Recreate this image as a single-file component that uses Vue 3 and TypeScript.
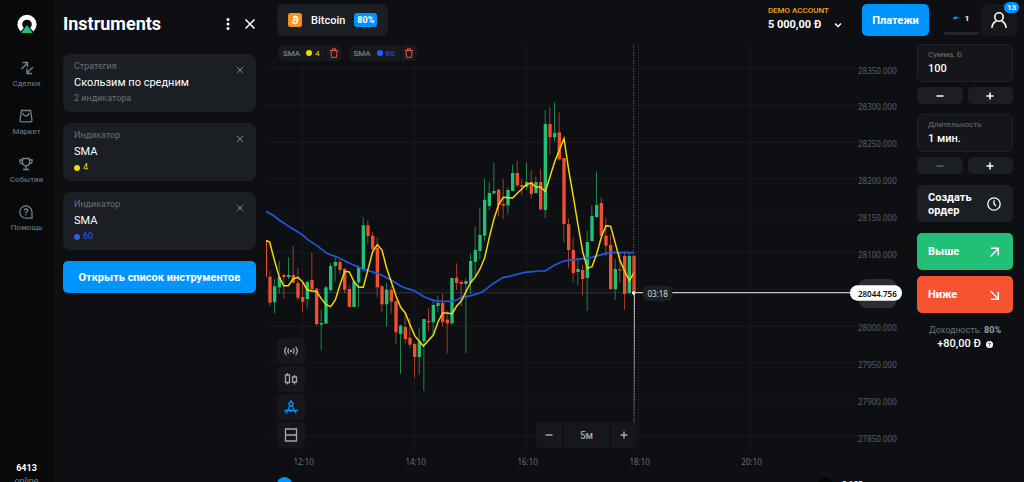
<script setup lang="ts">
import { ref } from 'vue'

type Candle = [high: number, top: number, bottom: number, low: number, up: 0 | 1]

const amount = ref('100')
const duration = ref('1 мин.')

const nav = [
  { id: 'deals', label: 'Сделки' },
  { id: 'market', label: 'Маркет' },
  { id: 'events', label: 'События' },
  { id: 'help', label: 'Помощь' },
]

const cards = [
  { kind: 'Стратегия', title: 'Скользим по средним', sub: '2 индикатора', tone: '' },
  { kind: 'Индикатор', title: 'SMA', sub: '4', tone: 'yellow' },
  { kind: 'Индикатор', title: 'SMA', sub: '60', tone: 'blue' },
]

const chips = [
  { name: 'SMA', period: '4', tone: 'yellow' },
  { name: 'SMA', period: '60', tone: 'blue' },
]

const tools = [
  { id: 'signals', label: 'Сигналы' },
  { id: 'candles', label: 'Тип графика' },
  { id: 'draw', label: 'Инструменты' },
  { id: 'layout', label: 'Раскладка' },
]

// The plot uses three units per pixel; one candle takes 14 units.
const STEP = 14
const candles: Candle[] = [
  [720, 722, 830, 832, 0],
  [813, 830, 908, 918, 0], [837, 859, 907, 939, 1], [783, 831, 862, 881, 1], [820, 825, 831, 895, 0],
  [772, 825, 831, 837, 1], [738, 825, 848, 849, 0], [804, 849, 893, 900, 0], [850, 891, 905, 938, 0],
  [842, 846, 897, 926, 1], [758, 840, 867, 877, 0], [864, 866, 972, 979, 0], [928, 969, 974, 1052, 1],
  [858, 862, 971, 972, 1], [789, 798, 870, 876, 1], [772, 786, 798, 845, 1], [780, 786, 810, 822, 0],
  [804, 807, 869, 879, 0], [857, 867, 921, 921, 0], [840, 845, 921, 921, 1], [797, 802, 847, 921, 1],
  [652, 676, 810, 816, 1], [659, 676, 708, 731, 0], [697, 707, 747, 756, 0], [713, 743, 862, 892, 0],
  [855, 859, 913, 935, 0], [848, 869, 913, 980, 1], [858, 870, 905, 941, 0], [900, 904, 997, 1032, 0],
  [974, 977, 1002, 1122, 1], [940, 981, 1017, 1031, 0], [955, 1013, 1034, 1043, 0], [1028, 1032, 1071, 1133, 0],
  [983, 1024, 1071, 1124, 1], [957, 957, 1024, 1172, 1], [924, 963, 967, 993, 0], [898, 915, 967, 1006, 1],
  [886, 909, 918, 937, 1], [881, 909, 966, 980, 0], [933, 959, 970, 1061, 0], [833, 834, 970, 974, 1],
  [790, 833, 849, 870, 0], [840, 846, 852, 920, 0], [835, 843, 852, 1059, 1], [761, 783, 849, 882, 1],
  [681, 750, 785, 828, 1], [622, 705, 753, 778, 1], [537, 600, 707, 723, 1], [546, 579, 618, 632, 1],
  [489, 573, 580, 583, 1], [567, 569, 615, 648, 0], [537, 612, 617, 657, 0], [562, 570, 616, 643, 1],
  [494, 519, 573, 574, 1], [482, 519, 556, 562, 0], [538, 555, 561, 586, 0], [489, 546, 561, 570, 1],
  [510, 546, 582, 597, 0], [530, 546, 579, 580, 1], [507, 546, 628, 632, 0], [330, 372, 630, 654, 1],
  [321, 372, 412, 465, 0], [307, 399, 412, 424, 1], [337, 397, 478, 482, 0], [474, 474, 672, 726, 0],
  [655, 673, 750, 805, 0], [713, 750, 819, 847, 0], [774, 807, 816, 857, 1], [795, 810, 837, 887, 0],
  [692, 726, 834, 933, 1], [616, 648, 723, 723, 1], [515, 615, 651, 654, 1], [592, 609, 707, 710, 0],
  [653, 707, 737, 770, 0], [705, 735, 867, 870, 0], [777, 807, 867, 900, 1], [755, 808, 812, 847, 0],
  [754, 768, 882, 930, 0], [760, 768, 879, 883, 1], [766, 768, 879, 879, 0],
]
const candleX = (i: number) => Math.round(-2 + STEP * i)

const fastSma =
  '0,721 11,726 25,780 40,832 53,857 67,857 82,836 96,832 110,846 124,870 152,875 166,896 180,914 194,920 208,900 222,854 236,814 250,816 264,845 278,862 292,862 306,808 320,755 334,734 348,750 362,805 376,846 390,888 404,922 418,939 432,974 446,1007 460,1024 472,1038 502,1005 516,966 530,939 544,939 558,942 572,918 586,903 600,875 614,847 628,831 642,807 656,773 670,712 684,656 698,614 712,592 740,594 754,580 768,566 782,553 796,549 810,561 824,561 838,575 866,485 894,416 908,510 922,590 936,675 950,755 964,805 978,800 992,762 1006,712 1020,677 1034,679 1048,730 1062,782 1076,813 1090,842 1104,818'
const slowSma =
  '0,634 20,645 40,660 68,679 110,705 124,718 152,736 180,758 194,765 208,769 236,782 264,796 292,808 334,820 348,826 376,841 404,858 418,864 432,868 446,873 474,890 502,901 516,904 558,904 572,900 586,893 614,887 642,879 656,871 670,859 684,849 698,841 712,832 726,830 750,824 777,817 820,813 838,813 866,795 894,783 922,779 950,776 978,772 1006,764 1034,757 1104,758'

const prices = [28350, 28300, 28250, 28200, 28150, 28100, 28050, 28000, 27950, 27900, 27850]
const priceY = (i: number) => Math.round(206 + 110.4 * i)
const times = ['12:10', '14:10', '16:10', '18:10', '20:10']
const timeX = (i: number) => 110 + 336 * i
</script>

<template>
  <div class="app">
    <nav class="rail">
      <a class="logo" href="#" aria-label="Olymp">
        <svg width="20" height="20" viewBox="0 0 20 20">
          <path d="M5.2 16.8A7.2 7.2 0 1 1 14.8 16.8" fill="none" stroke="#fff" stroke-width="4.8" />
          <path d="M10 12 15.8 20H4.2Z" fill="#22c076" stroke="#07090a" stroke-width="1" paint-order="stroke" />
        </svg>
      </a>
      <a v-for="item in nav" :key="item.id" class="rail-item" href="#">
        <svg width="16" height="16" viewBox="0 0 16 16" class="line">
          <template v-if="item.id === 'deals'">
            <path d="M2.500 9 8 3.500M3.500 2.500H8.500V7" />
            <path d="M14 7 8.500 12.500M8 8.500V13.500H13" />
          </template>
          <template v-else-if="item.id === 'market'">
            <path d="M3.500 2.500H12.500L14 12.200Q14 13.800 12.500 13.800H3.500Q2 13.800 2 12.200Z" />
            <path d="M5 5Q5.500 8 8 8T11 5" />
          </template>
          <template v-else-if="item.id === 'events'">
            <path d="M4.500 2.500H11.500V6Q11.500 9.800 8 9.800T4.500 6ZM8 10V13M5 13.500H11M4.500 4H1.800Q1.800 8 5 8M11.500 4H14.200Q14.200 8 11 8" />
          </template>
          <template v-else>
            <path d="M8 1.800A6.200 6.200 0 1 0 8 14.200H14V8A6.200 6.200 0 0 0 8 1.800Z" />
            <path d="M6.200 6.600Q6.300 5 8 5T9.800 6.500Q9.800 7.500 8 8.300V9.200M8 10.300V11.500" />
          </template>
        </svg>
        <span>{{ item.label }}</span>
      </a>
      <div class="online"><b>6413</b><span>online</span></div>
    </nav>

    <aside class="panel">
      <header class="panel-head">
        <h1>Instruments</h1>
        <button class="plain" aria-label="Меню">
          <svg width="12" height="14" viewBox="0 0 12 14" fill="#fff">
            <circle cx="6" cy="2.500" r="1.500" /><circle cx="6" cy="7" r="1.500" /><circle cx="6" cy="11.500" r="1.500" />
          </svg>
        </button>
        <button class="plain" aria-label="Закрыть">
          <svg width="12" height="12" viewBox="0 0 12 12" class="cross"><path d="M1.500 1.500 10.500 10.500M10.500 1.500 1.500 10.500" /></svg>
        </button>
      </header>
      <article v-for="(card, i) in cards" :key="i" class="card">
        <div class="card-text">
          <span class="kind">{{ card.kind }}</span>
          <h2>{{ card.title }}</h2>
          <span class="sub" :class="card.tone"><i v-if="card.tone" class="dot"></i>{{ card.sub }}</span>
        </div>
        <button class="plain card-close" aria-label="Удалить">
          <svg width="8" height="8" viewBox="0 0 8 8"><path d="M1 1 7 7M7 1 1 7" /></svg>
        </button>
      </article>
      <button class="open-list">Открыть список инструментов</button>
    </aside>

    <main class="workspace">
      <header class="topbar">
        <button class="asset">
          <svg width="14" height="14" viewBox="0 0 14 14">
            <rect width="14" height="14" rx="2.500" fill="#f7931a" />
            <g transform="rotate(12 7 7)" fill="none" stroke="#fff" stroke-width="1.300">
              <path d="M4.300 4H8Q9.500 4 9.500 5.400T8 6.900H5.500M8 6.900Q9.900 6.900 9.900 8.400T8 10H4.300M5.600 4V10M6.200 2.700V4M8 2.700V4M6.200 10V11.300M8 10V11.300" />
            </g>
          </svg>
          <span>Bitcoin</span>
          <b>80%</b>
        </button>
        <button class="account">
          <span class="account-text">
            <span class="account-kind">DEMO ACCOUNT</span>
            <span class="balance">5 000,00 Đ</span>
          </span>
          <svg width="8" height="8" viewBox="0 0 8 8"><path d="M1 2.500 4 5.500 7 2.500" fill="none" stroke="#fff" stroke-width="1.500" /></svg>
        </button>
        <button class="pay">Платежи</button>
        <button class="counter">
          <svg width="8" height="4" viewBox="0 0 8 4"><path d="M0 3.500Q0 0 3.500 0.500L7.500 2.500Q4 2 3 3Z" fill="#0094ff" /></svg>
          <span>1</span>
        </button>
        <button class="profile" aria-label="Профиль">
          <svg width="18" height="18" viewBox="0 0 18 18" fill="none" stroke="#fff" stroke-width="1.600">
            <circle cx="9" cy="6" r="4.200" /><path d="M1.800 16.800Q2.300 12 6.400 10M16.200 16.800Q15.700 12 11.600 10" />
          </svg>
          <span class="badge">13</span>
        </button>
      </header>

      <div class="trade">
        <section class="chart">
          <svg class="plot" viewBox="0 132 1926 1314" preserveAspectRatio="xMinYMin slice">
            <defs>
              <linearGradient id="fade" x1="0" y1="0" x2="0" y2="1">
                <stop offset="0" stop-color="#bfc2c6" /><stop offset="1" stop-color="#bfc2c6" stop-opacity="0.100" />
              </linearGradient>
            </defs>
            <g class="grid">
              <line v-for="(p, i) in prices" :key="p" x1="0" x2="1790" :y1="priceY(i)" :y2="priceY(i)" />
              <line v-for="(t, i) in times" :key="t" :x1="timeX(i)" :x2="timeX(i)" y1="132" y2="1355" />
            </g>
            <g class="axis">
              <template v-for="(p, i) in prices" :key="p">
                <text v-if="p !== 28050" x="1776" :y="priceY(i) + 15">{{ p }}.000</text>
              </template>
              <text v-for="(t, i) in times" :key="t" class="time" :x="timeX(i) + 3" y="1395">{{ t }}</text>
            </g>
            <line x1="0" x2="1104" y1="878" y2="878" stroke="#24272a" stroke-width="5" />
            <g v-for="(c, i) in candles" :key="i" :fill="c[4] ? '#22c076' : '#f24f30'">
              <rect :x="candleX(i) - 2" :y="c[0]" width="3" :height="c[3] - c[0]" opacity="0.650" />
              <rect :x="candleX(i) - 5" :y="c[1]" width="10" :height="c[2] - c[1]" />
            </g>
            <polyline :points="slowSma" fill="none" stroke="#1f58e3" stroke-width="5" />
            <polyline :points="fastSma" fill="none" stroke="#f0d80a" stroke-width="4.500" />
            <line x1="1103" x2="1103" y1="132" y2="1296" stroke="#55585c" stroke-width="3" stroke-dasharray="4 4" />
            <rect x="1104" y="879" width="3" height="410" fill="url(#fade)" />
            <line x1="1104" x2="1760" y1="878" y2="878" stroke="#c5c7c9" stroke-width="4" />
            <circle cx="1103" cy="879" r="5" fill="#fff" />
            <rect x="1131" y="857" width="88" height="46" rx="14" fill="#1c2023" />
            <text x="1175" y="890" class="timer">03:18</text>
            <rect x="1778" y="837" width="114" height="87" rx="24" fill="#2a2e33" />
            <rect x="1752" y="856" width="156" height="46" rx="22" fill="#fff" />
            <text x="1834" y="890" class="current">28044.756</text>
          </svg>

          <div class="chips">
            <div v-for="chip in chips" :key="chip.period" class="chip">
              <button class="chip-main">{{ chip.name }}<span :class="chip.tone"><i class="dot"></i>{{ chip.period }}</span></button>
              <button class="chip-del" aria-label="Удалить">
                <svg width="10" height="10" viewBox="0 0 10 10" fill="none" stroke="#e8553f" stroke-width="1"><path d="M1 2.500H9M3.500 2.500V.8H6.500V2.500M2 2.500 2.400 9.300H7.600L8 2.500" /></svg>
              </button>
            </div>
          </div>

          <div class="tools">
            <button v-for="tool in tools" :key="tool.id" :aria-label="tool.label" :class="{ active: tool.id === 'draw' }">
              <svg width="14" height="14" viewBox="0 0 14 14" class="line">
                <template v-if="tool.id === 'signals'">
                  <circle cx="7" cy="7" r="1.200" class="solid" />
                  <path d="M4.800 4.500Q3 7 4.800 9.500M9.200 4.500Q11 7 9.200 9.500M2.400 2.800Q-1 7 2.400 11.200M11.600 2.800Q15 7 11.600 11.200" />
                </template>
                <path v-else-if="tool.id === 'candles'" d="M1.500 3H5.500V10.500H1.500ZM3.500 1V3M3.500 10.500V12.500M8.500 5H12.500V10H8.500ZM10.500 3V5M10.500 10V12.500" />
                <path v-else-if="tool.id === 'draw'" d="M7 0V2M6 5.500 2 13.500M8 5.500 12 13.500M7 2A2 2 0 1 0 7 6A2 2 0 1 0 7 2M0 10.500H14M7 9V12" />
                <path v-else d="M1.500 1H12.500V13H1.500ZM1.500 7H12.500" />
              </svg>
            </button>
          </div>

          <div class="frame">
            <button aria-label="Меньше"><svg width="8" height="8" viewBox="0 0 8 8"><path d="M0.500 4H7.500" /></svg></button>
            <button class="frame-value">5м</button>
            <button aria-label="Больше"><svg width="8" height="8" viewBox="0 0 8 8"><path d="M0.500 4H7.500M4 .5V7.500" /></svg></button>
          </div>

          <div class="knob"></div>
          <div class="readout"><i></i><span>0:105</span></div>
        </section>

        <form class="order" @submit.prevent>
          <label class="field"><span>Сумма, Đ</span><input v-model="amount" /></label>
          <div class="stepper">
            <button type="button" aria-label="Уменьшить сумму"><svg width="8" height="8" viewBox="0 0 8 8"><path d="M0.500 4H7.500" /></svg></button>
            <button type="button" aria-label="Увеличить сумму"><svg width="8" height="8" viewBox="0 0 8 8"><path d="M0.500 4H7.500M4 .5V7.500" /></svg></button>
          </div>
          <label class="field"><span>Длительность</span><input v-model="duration" /></label>
          <div class="stepper">
            <button type="button" class="dim" aria-label="Уменьшить длительность"><svg width="8" height="8" viewBox="0 0 8 8"><path d="M0.500 4H7.500" /></svg></button>
            <button type="button" aria-label="Увеличить длительность"><svg width="8" height="8" viewBox="0 0 8 8"><path d="M0.500 4H7.500M4 .5V7.500" /></svg></button>
          </div>
          <button type="button" class="action create">
            <span>Создать ордер</span>
            <svg width="14" height="14" viewBox="0 0 14 14" fill="none" stroke="#fff" stroke-width="1.300"><circle cx="7" cy="7" r="6.200" /><path d="M7 3.300V7L9 9" /></svg>
          </button>
          <button type="button" class="action up">
            <span>Выше</span>
            <svg width="14" height="14" viewBox="0 0 14 14" fill="none" stroke="#fff" stroke-width="1.400"><path d="M3.500 11.500 11 4M4 3.200H11.300V10.500" /></svg>
          </button>
          <button type="button" class="action down">
            <span>Ниже</span>
            <svg width="14" height="14" viewBox="0 0 14 14" fill="none" stroke="#fff" stroke-width="1.400"><path d="M3.500 3 11 10.500M4 11.200H11.300V4" /></svg>
          </button>
          <p class="yield">Доходность: <b>80%</b></p>
          <p class="profit">+80,00 Đ
            <svg width="7" height="7" viewBox="0 0 7 7"><circle cx="3.500" cy="3.500" r="3.500" fill="#fff" /><path d="M2.400 2.800Q2.500 1.800 3.500 1.800T4.600 2.700Q4.600 3.200 3.500 3.800V4.300M3.500 4.800V5.500" fill="none" stroke="#0e0f13" stroke-width=".8" /></svg>
          </p>
        </form>
      </div>
    </main>
  </div>
</template>

<style>
body { margin: 0; background: #0e0f13; }
</style>

<style scoped>
* { box-sizing: border-box; }
button, input { font: inherit; color: inherit; border: 0; padding: 0; margin: 0; background: none; }
button { cursor: pointer; }
h1, h2, p { margin: 0; }
svg { display: block; flex: none; }
.app { display: flex; height: 100vh; overflow: hidden; background: #0e0f13; color: #fff; font-family: Roboto, "Liberation Sans", sans-serif; font-size: 9px; }
.line { fill: none; stroke: currentColor; stroke-width: 1.3; }
.yellow { color: #f0d80a; }
.blue { color: #2a5cf5; }
.dot { width: 6px; height: 6px; border-radius: 50%; background: currentColor; }

.rail { flex: none; width: 53px; background: #07090a; display: flex; flex-direction: column; align-items: center; color: #74828e; overflow: hidden; }
.logo { padding: 13px 0 27px; }
.rail-item { display: flex; flex-direction: column; align-items: center; height: 48px; font-size: 8px; line-height: 16px; color: inherit; text-decoration: none; flex: none; }
.online { margin-top: auto; margin-bottom: -6px; display: flex; flex-direction: column; align-items: center; line-height: 13px; }
.online b { color: #fff; }

.panel { flex: none; width: 213px; padding: 0 10px; display: flex; flex-direction: column; gap: 11px; }
.panel-head { height: 43px; padding-top: 5px; display: flex; align-items: center; gap: 10px; }
.panel-head h1 { flex: 1; font-size: 18px; font-weight: 700; line-height: 24px; }
.cross { fill: none; stroke: #fff; stroke-width: 1.5; }
.card { height: 58px; padding: 6px 12px 7px 11px; border-radius: 8px; background: #1b1e22; display: flex; justify-content: space-between; }
.card-text { display: flex; flex-direction: column; }
.kind, .sub { line-height: 13px; }
.kind, .sub:not(.yellow):not(.blue) { color: #65737e; }
.card h2 { font-size: 11px; font-weight: 400; line-height: 19px; }
.sub { display: flex; align-items: center; gap: 3px; }
.card-close { align-self: flex-start; margin-top: 6px; }
.card-close svg { fill: none; stroke: #7c8993; stroke-width: 1; }
.open-list { height: 32px; border-radius: 5px; background: #0094ff; font-size: 11px; font-weight: 700; }

.workspace { flex: 1; min-width: 0; display: flex; flex-direction: column; }
.topbar { height: 44px; flex: none; padding: 4px 7px 8px 11px; display: flex; align-items: stretch; }
.asset { display: flex; align-items: center; gap: 9px; padding: 0 11px; border-radius: 6px; background: #1b1e22; font-size: 11px; font-weight: 500; }
.asset b { background: #0094ff; border-radius: 3px; padding: 0 3px; line-height: 14px; font-size: 9px; }
.account { margin-left: auto; display: flex; align-items: center; gap: 5px; margin-right: 20px; padding-bottom: 4px; text-align: left; }
.account svg { margin-top: 14px; }
.account-text { display: flex; flex-direction: column; }
.account-kind { color: #f5a623; font-size: 8px; font-weight: 500; line-height: 13px; }
.balance { font-size: 11px; font-weight: 700; line-height: 15px; }
.pay { width: 67px; border-radius: 5px; background: #0094ff; font-size: 11px; font-weight: 700; }
.counter { width: 36px; height: 31px; margin-left: 14px; margin-right: 2px; border-radius: 4px; border-bottom: 3px solid #24272b; display: flex; justify-content: center; align-items: center; gap: 4px; font-size: 8px; font-weight: 700; }
.profile { position: relative; width: 36px; border-radius: 6px; background: #15171a; display: flex; align-items: center; justify-content: center; }
.badge { position: absolute; right: -2px; top: -2px; min-width: 15px; line-height: 11px; border-radius: 6px; background: #0094ff; font-size: 8px; font-weight: 700; }

.trade { flex: 1; min-height: 0; display: flex; }
.chart { flex: 1; min-width: 0; position: relative; overflow: hidden; }
.plot { width: 100%; height: 100%; }
.grid line { stroke: #191b1f; stroke-width: 3; }
.axis text, .timer, .current { font-family: "Noto Sans", sans-serif; font-size: 24px; fill: #56606a; }
.axis .time, .timer, .current { text-anchor: middle; }
.axis .time { fill: #65707a; }
.timer { fill: #d5d7d9; }
.current { fill: #111; font-weight: 600; }
.chips { position: absolute; left: 12px; top: 1px; display: flex; gap: 7px; }
.chip { display: flex; gap: 1px; height: 16px; }
.chip button { background: #17191d; display: flex; align-items: center; color: #8c9aa6; font-size: 8px; }
.chip-main { padding: 0 5px; border-radius: 5px 0 0 5px; gap: 6px; }
.chip-main span { display: flex; align-items: center; gap: 3px; }
.chip-main .yellow { color: #f0d80a; }
.chip-main .blue { color: #2a5cf5; }
.chip-del { padding: 0 3px; border-radius: 0 5px 5px 0; }
.tools { position: absolute; left: 11px; bottom: 34px; display: flex; flex-direction: column; gap: 2px; }
.tools button { width: 28px; height: 26px; border-radius: 5px; background: #15171a; color: #a5a7a9; display: flex; align-items: center; justify-content: center; }
.tools .active { color: #0094ff; }
.solid { fill: currentColor; stroke: none; }
.frame { position: absolute; left: 270px; bottom: 34px; height: 26px; display: flex; gap: 2px; border-radius: 5px; overflow: hidden; color: #a5a7a9; font-size: 10px; font-weight: 500; }
.frame button { width: 26px; background: #15171a; display: flex; align-items: center; justify-content: center; }
.frame .frame-value { width: 45px; }
.frame svg, .stepper svg { fill: none; stroke: currentColor; stroke-width: 1.5; }
.knob { position: absolute; left: 11px; bottom: -10px; width: 15px; height: 15px; border-radius: 50%; background: #0094ff; }
.readout { position: absolute; left: 553px; bottom: -10px; display: flex; gap: 10px; font-size: 8px; font-weight: 700; line-height: 14px; }
.readout i { width: 13px; height: 15px; border-radius: 50%; background: #050607; }

.order { flex: none; width: 116px; padding: 0 11px 0 9px; display: flex; flex-direction: column; }
.field { height: 38px; flex: none; padding: 4px 10px; border: 1px solid #202327; border-radius: 6px; background: #141619; display: flex; flex-direction: column; }
.field span { font-size: 8px; line-height: 12px; color: #65737e; }
.field input { width: 100%; height: 15px; font-size: 11px; font-weight: 500; outline: none; }
.stepper { display: flex; gap: 5px; margin: 5px 0 10px; }
.stepper button { flex: 1; height: 17px; border-radius: 5px; background: #1b1e22; display: flex; align-items: center; justify-content: center; }
.stepper .dim { color: #59636c; }
.action { height: 37px; flex: none; border-radius: 5px; padding: 0 12px 0 11px; display: flex; justify-content: space-between; align-items: center; font-size: 11px; font-weight: 700; line-height: 13px; text-align: left; }
.create { background: #1b1e22; margin: 1px 0 11px; }
.create span { width: 48px; }
.up { background: #22c076; margin-bottom: 6px; }
.down { background: #f55331; }
.yield { margin-top: 11px; text-align: center; color: #65737e; line-height: 13px; }
.yield b { color: #8ea0ad; }
.profit { display: flex; justify-content: center; align-items: center; gap: 5px; font-size: 11px; font-weight: 500; line-height: 14px; }
</style>
